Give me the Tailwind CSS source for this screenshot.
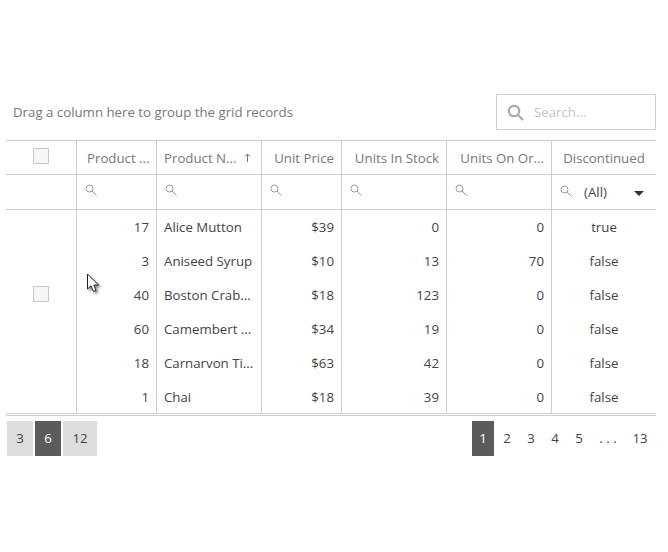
<!DOCTYPE html>
<html lang="en">
  <head>
    <meta charset="UTF-8" />
    <title>Products grid</title>
    <script src="https://cdn.jsdelivr.net/npm/@tailwindcss/browser@4"></script>
  </head>
  <body class="bg-white">
    <div class="relative w-[668px] h-[552px] overflow-hidden pt-[94px] pl-[6px] font-['Open_Sans','Noto_Sans',sans-serif] text-[13.25px] text-[#444]">
      <!-- Toolbar -->
      <div class="flex items-center justify-between w-[650px] h-[46px] pb-[10px]">
        <span class="pl-[7px] pt-[1px] text-[#777]">Drag a column here to group the grid records</span>
        <div class="flex items-center w-[160px] h-[36px] border border-[#d2cdcd] pl-[10px] gap-[10px]">
          <svg class="w-[17px] h-[17px]" viewBox="0 0 17 17" fill="none" stroke="#aaa" stroke-width="2.2"><circle cx="7" cy="7" r="5.2" /><path d="M10.8 10.8 L16 16" /></svg>
          <span class="pt-[1px] text-[#c4c4c4]">Search...</span>
        </div>
      </div>

      <!-- Grid -->
      <div class="w-[650px]">
        <!-- Header -->
        <div class="grid grid-cols-[70px_80px_105px_80px_105px_105px_105px] h-[35px] border-t border-b border-[#d2cdcd] text-[#777]">
          <div class="flex justify-center pt-[7px] pr-[1px]"><span class="w-[16px] h-[16px] border border-[#c8c8c8] bg-[#f6f6f6]"></span></div>
          <div class="border-l border-[#d2cdcd] flex items-center pt-[2px] pl-[10px] whitespace-nowrap">Product ...</div>
          <div class="border-l border-[#d2cdcd] flex items-center justify-between pt-[2px] pl-[7px] pr-[10px] whitespace-nowrap">
            <span>Product N...</span>
            <svg class="w-[7px] h-[9px] -mt-[2px]" viewBox="0 0 7 9" fill="none" stroke="#777"><path d="M3.5 9 V1 M1 3.5 L3.5 1 L6 3.5" /></svg>
          </div>
          <div class="border-l border-[#d2cdcd] flex items-center justify-end pt-[2px] pr-[7px] whitespace-nowrap">Unit Price</div>
          <div class="border-l border-[#d2cdcd] flex items-center justify-end pt-[2px] pr-[7px] whitespace-nowrap">Units In Stock</div>
          <div class="border-l border-[#d2cdcd] flex items-center justify-end pt-[2px] pr-[7px] whitespace-nowrap">Units On Or...</div>
          <div class="border-l border-[#d2cdcd] flex items-center justify-center pt-[2px] whitespace-nowrap">Discontinued</div>
        </div>

        <!-- Filter row -->
        <div class="grid grid-cols-[70px_80px_105px_80px_105px_105px_105px] h-[35px] border-b border-[#d2cdcd]">
          <div></div>
          <div class="border-l border-[#d2cdcd] pl-[8px] pt-[9px]"><svg class="w-[12px] h-[12px]" viewBox="0 0 12 12" fill="none" stroke="#999"><circle cx="4.5" cy="4.5" r="3.5" /><path d="M7 7 L11.5 11.5" /></svg></div>
          <div class="border-l border-[#d2cdcd] pl-[8px] pt-[9px]"><svg class="w-[12px] h-[12px]" viewBox="0 0 12 12" fill="none" stroke="#999"><circle cx="4.5" cy="4.5" r="3.5" /><path d="M7 7 L11.5 11.5" /></svg></div>
          <div class="border-l border-[#d2cdcd] pl-[8px] pt-[9px]"><svg class="w-[12px] h-[12px]" viewBox="0 0 12 12" fill="none" stroke="#999"><circle cx="4.5" cy="4.5" r="3.5" /><path d="M7 7 L11.5 11.5" /></svg></div>
          <div class="border-l border-[#d2cdcd] pl-[8px] pt-[9px]"><svg class="w-[12px] h-[12px]" viewBox="0 0 12 12" fill="none" stroke="#999"><circle cx="4.5" cy="4.5" r="3.5" /><path d="M7 7 L11.5 11.5" /></svg></div>
          <div class="border-l border-[#d2cdcd] pl-[8px] pt-[9px]"><svg class="w-[12px] h-[12px]" viewBox="0 0 12 12" fill="none" stroke="#999"><circle cx="4.5" cy="4.5" r="3.5" /><path d="M7 7 L11.5 11.5" /></svg></div>
          <div class="border-l border-[#d2cdcd] pl-[8px] flex items-center">
            <svg class="w-[12px] h-[12px] -mt-[3px]" viewBox="0 0 12 12" fill="none" stroke="#999"><circle cx="4.5" cy="4.5" r="3.5" /><path d="M7 7 L11.5 11.5" /></svg>
            <span class="ml-[12px] mt-[2px]">(All)</span>
            <span class="ml-[27px] mt-[2px] w-0 h-0 border-l-[5px] border-r-[5px] border-t-[5px] border-l-transparent border-r-transparent border-t-[#333]"></span>
          </div>
        </div>

        <!-- Rows -->
        <div class="grid grid-cols-[70px_80px_105px_80px_105px_105px_105px] auto-rows-[34px] h-[204px] border-b border-[#d2cdcd]">
          <div class="row-span-6 flex items-center justify-center pb-[36px] pr-[1px]"><span class="w-[16px] h-[16px] border border-[#c8c8c8] bg-[#f6f6f6]"></span></div>

          <div class="border-l border-[#d2cdcd] flex items-center justify-end pt-[2px] pr-[7px]">17</div>
          <div class="border-l border-[#d2cdcd] flex items-center pt-[2px] pl-[7px] whitespace-nowrap">Alice Mutton</div>
          <div class="border-l border-[#d2cdcd] flex items-center justify-end pt-[2px] pr-[7px]">$39</div>
          <div class="border-l border-[#d2cdcd] flex items-center justify-end pt-[2px] pr-[7px]">0</div>
          <div class="border-l border-[#d2cdcd] flex items-center justify-end pt-[2px] pr-[7px]">0</div>
          <div class="border-l border-[#d2cdcd] flex items-center justify-center pt-[2px]">true</div>

          <div class="border-l border-[#d2cdcd] flex items-center justify-end pt-[2px] pr-[7px]">3</div>
          <div class="border-l border-[#d2cdcd] flex items-center pt-[2px] pl-[7px] whitespace-nowrap">Aniseed Syrup</div>
          <div class="border-l border-[#d2cdcd] flex items-center justify-end pt-[2px] pr-[7px]">$10</div>
          <div class="border-l border-[#d2cdcd] flex items-center justify-end pt-[2px] pr-[7px]">13</div>
          <div class="border-l border-[#d2cdcd] flex items-center justify-end pt-[2px] pr-[7px]">70</div>
          <div class="border-l border-[#d2cdcd] flex items-center justify-center pt-[2px]">false</div>

          <div class="border-l border-[#d2cdcd] flex items-center justify-end pt-[2px] pr-[7px]">40</div>
          <div class="border-l border-[#d2cdcd] flex items-center pt-[2px] pl-[7px] whitespace-nowrap">Boston Crab...</div>
          <div class="border-l border-[#d2cdcd] flex items-center justify-end pt-[2px] pr-[7px]">$18</div>
          <div class="border-l border-[#d2cdcd] flex items-center justify-end pt-[2px] pr-[7px]">123</div>
          <div class="border-l border-[#d2cdcd] flex items-center justify-end pt-[2px] pr-[7px]">0</div>
          <div class="border-l border-[#d2cdcd] flex items-center justify-center pt-[2px]">false</div>

          <div class="border-l border-[#d2cdcd] flex items-center justify-end pt-[2px] pr-[7px]">60</div>
          <div class="border-l border-[#d2cdcd] flex items-center pt-[2px] pl-[7px] whitespace-nowrap">Camembert ...</div>
          <div class="border-l border-[#d2cdcd] flex items-center justify-end pt-[2px] pr-[7px]">$34</div>
          <div class="border-l border-[#d2cdcd] flex items-center justify-end pt-[2px] pr-[7px]">19</div>
          <div class="border-l border-[#d2cdcd] flex items-center justify-end pt-[2px] pr-[7px]">0</div>
          <div class="border-l border-[#d2cdcd] flex items-center justify-center pt-[2px]">false</div>

          <div class="border-l border-[#d2cdcd] flex items-center justify-end pt-[2px] pr-[7px]">18</div>
          <div class="border-l border-[#d2cdcd] flex items-center pt-[2px] pl-[7px] whitespace-nowrap">Carnarvon Ti...</div>
          <div class="border-l border-[#d2cdcd] flex items-center justify-end pt-[2px] pr-[7px]">$63</div>
          <div class="border-l border-[#d2cdcd] flex items-center justify-end pt-[2px] pr-[7px]">42</div>
          <div class="border-l border-[#d2cdcd] flex items-center justify-end pt-[2px] pr-[7px]">0</div>
          <div class="border-l border-[#d2cdcd] flex items-center justify-center pt-[2px]">false</div>

          <div class="border-l border-[#d2cdcd] flex items-center justify-end pt-[2px] pr-[7px]">1</div>
          <div class="border-l border-[#d2cdcd] flex items-center pt-[2px] pl-[7px] whitespace-nowrap">Chai</div>
          <div class="border-l border-[#d2cdcd] flex items-center justify-end pt-[2px] pr-[7px]">$18</div>
          <div class="border-l border-[#d2cdcd] flex items-center justify-end pt-[2px] pr-[7px]">39</div>
          <div class="border-l border-[#d2cdcd] flex items-center justify-end pt-[2px] pr-[7px]">0</div>
          <div class="border-l border-[#d2cdcd] flex items-center justify-center pt-[2px]">false</div>
        </div>

        <!-- Pager -->
        <div class="flex items-start justify-between border-t border-[#d2cdcd] mt-[1px] pt-[5px] pl-[1px]">
          <div class="flex gap-[2px]">
            <span class="flex items-center justify-center w-[26px] h-[35px] bg-[#dddddd]">3</span>
            <span class="flex items-center justify-center w-[26px] h-[35px] bg-[#5b5b5b] text-white">6</span>
            <span class="flex items-center justify-center w-[34px] h-[35px] bg-[#dddddd]">12</span>
          </div>
          <div class="flex items-center h-[35px] pr-[8px]">
            <span class="flex items-center justify-center w-[22px] h-[35px] bg-[#5b5b5b] text-white">1</span>
            <span class="w-[24px] ml-[1px] text-center">2</span>
            <span class="w-[24px] text-center">3</span>
            <span class="w-[24px] text-center">4</span>
            <span class="w-[24px] text-center">5</span>
            <span class="w-[41px] pr-[7px] text-center">. . .</span>
            <span class="w-[16px] text-center">13</span>
          </div>
        </div>
      </div>

      <!-- Mouse pointer caught in the shot -->
      <svg class="absolute left-[87px] top-[273px] w-[15px] h-[21px] drop-shadow-[2px_2px_1px_rgba(0,0,0,0.45)]" viewBox="0 0 15 21"><path d="M0.500 1 V16 L4 12.800 L6.500 18.500 L9 17.300 L6.800 12 L11.500 12 Z" fill="#fff" stroke="#222" /></svg>
    </div>
  </body>
</html>
